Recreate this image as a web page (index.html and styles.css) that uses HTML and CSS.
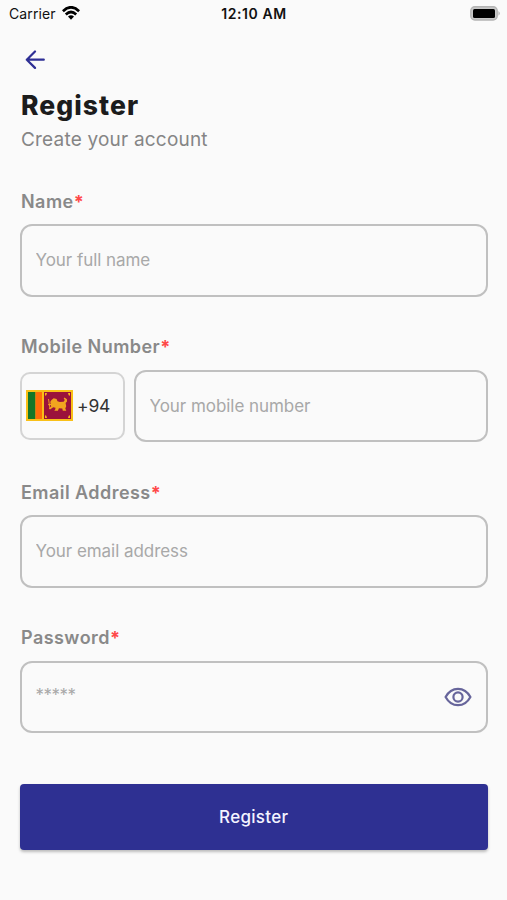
FILE: index.html
```html
<!DOCTYPE html>
<html lang="en">
<head>
<meta charset="utf-8">
<title>Register</title>
<link rel="stylesheet" href="styles.css">
</head>
<body>
<header class="status">
  <div class="carrier"><span>Carrier</span>
    <svg width="18" height="14" viewBox="0 0 18 14" fill="none" stroke="#000" stroke-width="2.7"><path d="M.9 5.2Q9-2.6 17.1 5.2M3.8 8.4Q9 3.6 14.2 8.4"/><path d="M6 10.6Q9 8 12 10.6L9 13.7Z" fill="#000" stroke="none"/></svg>
  </div>
  <div class="time">12:10 AM</div>
  <svg class="battery" width="31" height="15" viewBox="0 0 31 15"><rect x=".8" y=".8" width="26.4" height="13.2" rx="4" fill="#c8c8c8" stroke="#b4b4b4" stroke-width="1.4"/><rect x="3" y="3" width="22" height="9" rx="1.5" fill="#000"/><path d="M28.5 5Q31 7.4 28.5 9.8Z" fill="#aaa"/></svg>
</header>
<main class="page">
  <button class="back" type="button" aria-label="Back"><svg width="20" height="20" viewBox="0 0 20 20" fill="none" stroke="#2e2f95" stroke-width="2.2" stroke-linecap="round" stroke-linejoin="round"><path d="M10 1.5 1.8 9.7l8.2 8.2M1.8 9.7h17"/></svg></button>
  <h1 class="title">Register</h1>
  <p class="subtitle">Create your account</p>
  <form class="form">
    <div class="field">
      <label class="label" for="name">Name<b>*</b></label>
      <input class="input" id="name" type="text" placeholder="Your full name">
    </div>
    <div class="field">
      <label class="label" for="mobile">Mobile Number<b>*</b></label>
      <div class="row">
        <div class="code">
          <svg width="47" height="31" viewBox="0 0 47 31"><path fill="#f9c018" d="M0 0h47v31H0z"/><path fill="#147628" d="M2 2h7.5v27H2z"/><path fill="#ff6d0a" d="M9.5 2H16v27H9.5z"/><path fill="#9b123b" d="M18 2h27v27H18z"/><path fill="#f9b918" d="M19 3h2l-.7 2.2L19 5.8zM44 3h-2l.7 2.2 1.3.6zM19 28h2l-.7-2.2-1.3-.6zM44 28h-2l.7-2.2 1.3-.6z"/><path fill="#f2a51f" d="m25.5 10 2.2-1.8 2.9.7.9 2.3 2.3.8 3.8-.3 1.2-1.8-1.1-1.3.8-1.2 2.4 1.8.1 2.2-1.4 1.5.6 3.4-.9 2.1 1 2.4h-3.5l-.5-2.3-3.4-.2-1 2.5h-3.6l1-1.6.2-1.5-2.3-.4-3.2 2.1-1.2-1.2 2.4-1.8-.5-1.4-2.3.2-.3-1.2 2.8-.3-.7-1.6z"/><path d="m22.5 9 1.5 9.7M25 13l2.3-.8" stroke="#f2a51f" stroke-width=".9"/></svg>
          <span>+94</span>
        </div>
        <input class="input" id="mobile" type="tel" placeholder="Your mobile number">
      </div>
    </div>
    <div class="field">
      <label class="label" for="email">Email Address<b>*</b></label>
      <input class="input" id="email" type="email" placeholder="Your email address">
    </div>
    <div class="field">
      <label class="label" for="password">Password<b>*</b></label>
      <div class="input password">
        <input id="password" type="password" placeholder="*****">
        <svg width="28" height="20" viewBox="0 0 28 20" fill="none" stroke="#67659b" stroke-width="2.2"><path d="M1.6 10Q6 1.8 14 1.8T26.4 10Q22 18.2 14 18.2T1.6 10Z"/><circle cx="14" cy="10" r="4.6"/></svg>
      </div>
    </div>
    <button class="submit" type="submit">Register</button>
  </form>
</main>
</body>
</html>
```
FILE: styles.css
```css
* { box-sizing: border-box; }
body {
  margin: 0;
  height: 900px;
  overflow: hidden;
  background: #fafafa;
  font-family: Inter, "Liberation Sans", sans-serif;
}
svg { display: block; flex: none; }
button { border: 0; padding: 0; font: inherit; }
.status {
  display: grid;
  grid-template-columns: 1fr auto 1fr;
  align-items: center;
  height: 28px;
  padding: 0 7px 2px 9px;
  color: #111;
  font-size: 14px;
}
.carrier { display: flex; align-items: center; gap: 6px; letter-spacing: .1px; }
.time { margin-right: 1px; font-weight: 600; letter-spacing: .55px; }
.battery { justify-self: end; margin-right: -1px; }
.page { padding: 22px 19.5px 0 20px; }
.back { display: block; margin-left: 5px; background: none; }
.title {
  margin: 19px 0 0 1px;
  font-size: 26.5px;
  line-height: 32px;
  font-weight: 800;
  letter-spacing: 1.05px;
  color: #1c1c1c;
}
.subtitle {
  margin: 6px 0 0 1px;
  font-size: 19px;
  line-height: 26px;
  letter-spacing: .2px;
  color: #858585;
}
.form { margin-top: 37px; }
.field { height: 145.4px; }
.label {
  display: block;
  height: 34.4px;
  padding-left: 1px;
  font-size: 18px;
  line-height: 24px;
  font-weight: 600;
  letter-spacing: .45px;
  color: #898989;
}
.label b { color: #ff4848; font-weight: 700; }
.input {
  display: block;
  width: 100%;
  min-width: 0;
  height: 72.5px;
  padding: 0 13.5px;
  border: 2px solid #c0c0c0;
  border-radius: 12px;
  background: none;
  font: 17px Inter, "Liberation Sans", sans-serif;
  letter-spacing: -.05px;
}
input { outline: 0; }
input::placeholder { color: #a8a8a8; opacity: 1; }
#name { padding-bottom: 1px; }
.row { display: flex; align-items: center; gap: 9px; }
.code {
  display: flex;
  flex: none;
  align-items: center;
  gap: 4px;
  width: 105px;
  height: 68px;
  padding: 0 0 1px 4px;
  border: 2px solid #d4d4d4;
  border-radius: 10px;
  color: #333;
  font-size: 17.5px;
  letter-spacing: -.2px;
}
.password { display: flex; align-items: center; }
.password input {
  flex: 1;
  min-width: 0;
  padding: 0 0 4px;
  border: 0;
  background: none;
  font: inherit;
  letter-spacing: -.5px;
}
.submit {
  display: block;
  width: 100%;
  height: 66px;
  margin-top: 12.4px;
  border-radius: 4px;
  background: #2e3092;
  box-shadow: 0 2px 3px rgba(0, 0, 0, .25);
  color: #f4f4ff;
  font-size: 17px;
  font-weight: 500;
  letter-spacing: .3px;
}
```
